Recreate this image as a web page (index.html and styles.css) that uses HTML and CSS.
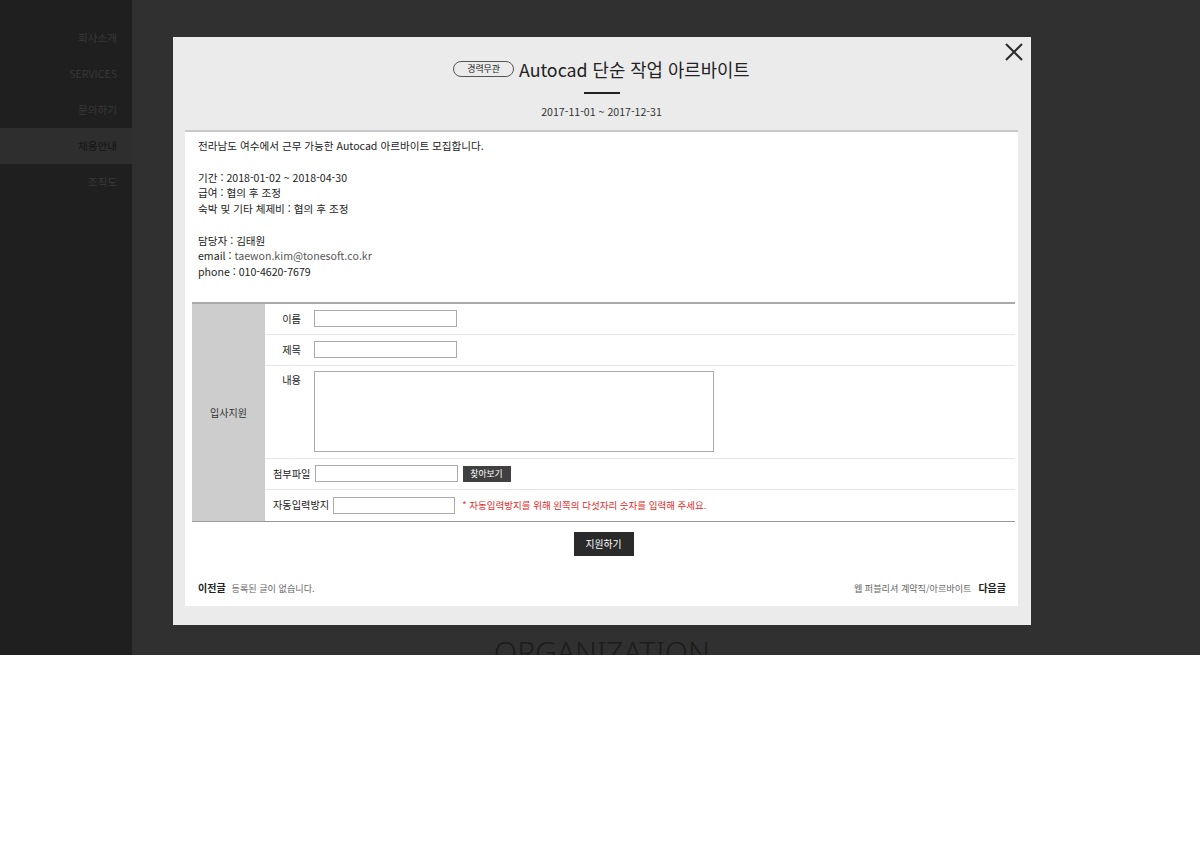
FILE: index.html
```html
<!DOCTYPE html>
<html lang="ko">
<head>
<meta charset="utf-8">
<title>채용안내</title>
<link rel="stylesheet" href="styles.css">
</head>
<body>
<div class="page">
  <aside class="sidebar">
    <ul class="menu">
      <li>회사소개</li>
      <li>SERVICES</li>
      <li>문의하기</li>
      <li class="active">채용안내</li>
      <li>조직도</li>
    </ul>
  </aside>
  <main class="main">
    <div class="top-bar"></div>
    <h2 class="org-title">ORGANIZATION</h2>
  </main>

  <div class="modal">
    <button class="close" aria-label="닫기">
      <svg width="18" height="18" viewBox="0 0 18 18"><path d="M1 1 L17 17 M17 1 L1 17" stroke="#2b2b2b" stroke-width="2" fill="none"/></svg>
    </button>
    <div class="modal-head">
      <h1 class="title"><span class="badge">경력무관</span>Autocad 단순 작업 아르바이트</h1>
      <div class="title-line"></div>
      <p class="date">2017-11-01 ~ 2017-12-31</p>
    </div>
    <div class="modal-body">
      <div class="desc">
        <p>전라남도 여수에서 근무 가능한 Autocad 아르바이트 모집합니다.</p>
        <p class="blank">&nbsp;</p>
        <p>기간 : 2018-01-02 ~ 2018-04-30</p>
        <p>급여 : 협의 후 조정</p>
        <p>숙박 및 기타 체제비 : 협의 후 조정</p>
        <p class="blank">&nbsp;</p>
        <p>담당자 : 김태원</p>
        <p>email : <a class="mail">taewon.kim@tonesoft.co.kr</a></p>
        <p>phone : 010-4620-7679</p>
      </div>

      <div class="apply">
        <div class="apply-head">입사지원</div>
        <div class="apply-rows">
          <div class="row"><span class="lbl">이름</span><span class="input"></span></div>
          <div class="row"><span class="lbl">제목</span><span class="input"></span></div>
          <div class="row row-top"><span class="lbl">내용</span><span class="textarea"></span></div>
          <div class="row"><span class="lbl">첨부파일</span><span class="input"></span><span class="find">찾아보기</span></div>
          <div class="row row-last"><span class="lbl">자동입력방지</span><span class="input input-short"></span><span class="warn">* 자동입력방지를 위해 왼쪽의 다섯자리 숫자를 입력해 주세요.</span></div>
        </div>
      </div>

      <div class="submit-wrap"><span class="submit">지원하기</span></div>

      <div class="pager">
        <div class="prev"><b>이전글</b><span>등록된 글이 없습니다.</span></div>
        <div class="next"><span>웹 퍼블리셔 계약직/아르바이트</span><b>다음글</b></div>
      </div>
    </div>
  </div>
</div>
</body>
</html>
```

FILE: styles.css
```css
* { box-sizing: border-box; }
html, body { margin: 0; padding: 0; background: #fff; }
body {
  font-family: "Noto Sans CJK KR", "Noto Sans", sans-serif;
  color: #222;
}
p, h1, h2, ul { margin: 0; padding: 0; }

.page {
  position: relative;
  height: 655px;
  display: flex;
  background: #303030;
  overflow: hidden;
}

.sidebar {
  width: 132px;
  background: #1f1f1f;
  padding-top: 20px;
}
.menu { list-style: none; }
.menu li {
  height: 36px;
  line-height: 36px;
  text-align: right;
  padding-right: 15px;
  font-size: 10.6px;
  color: #383838;
}
.menu li.active {
  background: #2e2e2e;
  color: #141414;
}

.main {
  flex: 1;
  display: flex;
  flex-direction: column;
  align-items: center;
  padding-right: 128px;
}
.top-bar {
  width: 36px;
  height: 2px;
  margin-top: 4px;
  background: #111;
}
.org-title {
  margin-top: 628px;
  font-size: 30px;
  font-weight: 300;
  font-family: "Noto Sans", "Noto Sans CJK KR", sans-serif;
  color: #1c1c1c;
  line-height: 40px;
}

.modal {
  position: absolute;
  left: 173px;
  top: 37px;
  width: 858px;
  height: 588px;
  background: #ebebeb;
  padding: 0 13px 0 12px;
}
.close {
  position: absolute;
  right: 8px;
  top: 6px;
  width: 18px;
  height: 18px;
  padding: 0;
  border: 0;
  background: none;
}
.close svg { display: block; }

.modal-head {
  padding-top: 19px;
  display: flex;
  flex-direction: column;
  align-items: center;
  height: 93px;
}
.title {
  font-size: 17.8px;
  font-weight: 400;
  line-height: 26px;
  color: #222;
  display: flex;
  align-items: center;
}
.badge {
  display: inline-block;
  font-size: 8.9px;
  line-height: 14px;
  height: 16px;
  padding: 0 13px;
  border: 1px solid #555;
  border-radius: 8px;
  margin-right: 5px;
  color: #222;
}
.title-line {
  width: 36px;
  height: 2px;
  background: #222;
  margin-top: 10px;
}
.date {
  font-size: 10.6px;
  color: #333;
  margin-top: 10px;
  line-height: 16px;
}

.modal-body {
  background: #fff;
  border-top: 2px solid #c8c8c8;
  height: 476px;
  padding: 6px 0 0 0;
}
.desc {
  padding: 0 13px;
  font-size: 10.6px;
  line-height: 15.75px;
  color: #222;
}
.mail { color: #555; text-decoration: none; }

.apply {
  display: flex;
  margin: 22px 3px 0 7px;
  border-top: 2px solid #aaa;
  border-bottom: 1px solid #999;
}
.apply-head {
  width: 73px;
  background: #cdcdcd;
  display: flex;
  align-items: center;
  justify-content: center;
  font-size: 10px;
  color: #333;
}
.apply-rows { flex: 1; }
.row {
  display: flex;
  align-items: center;
  height: 31px;
  padding-left: 8px;
  border-bottom: 1px solid #e6e6e6;
  font-size: 10.2px;
}
.row-top {
  align-items: flex-start;
  height: 93px;
  padding-top: 5px;
}
.row-top .lbl { margin-top: 2px; }
.row-last { height: 31px; border-bottom: 0; }
.lbl {
  min-width: 37px;
  text-align: center;
  margin-right: 4px;
  line-height: 14px;
  color: #222;
}
.input {
  display: inline-block;
  width: 143px;
  height: 17px;
  border: 1px solid #aaa;
  background: #fff;
}
.input-short { width: 122px; }
.textarea {
  display: inline-block;
  width: 400px;
  height: 81px;
  border: 1px solid #aaa;
}
.find {
  display: inline-block;
  margin-left: 5px;
  width: 48px;
  height: 16px;
  line-height: 16px;
  background: #404040;
  color: #fff;
  font-size: 8.8px;
  text-align: center;
}
.warn {
  margin-left: 7px;
  font-size: 9.5px;
  color: #e52a2a;
}

.submit-wrap {
  display: flex;
  justify-content: center;
  margin: 10px 3px 0 7px;
}
.submit {
  display: inline-block;
  width: 60px;
  height: 24px;
  line-height: 24px;
  text-align: center;
  background: #2a2a2a;
  color: #fff;
  font-size: 9.8px;
}

.pager {
  display: flex;
  justify-content: space-between;
  align-items: center;
  padding: 0 12px 0 13px;
  margin-top: 22px;
  height: 18px;
  line-height: 18px;
}
.pager b { font-size: 10px; color: #222; font-weight: 700; }
.pager span { font-size: 9.1px; color: #666; }
.prev span { margin-left: 6px; }
.next span { margin-right: 7px; }
```
